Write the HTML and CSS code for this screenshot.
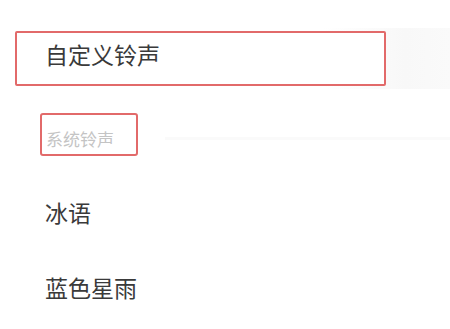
FILE: index.html
```html
<!DOCTYPE html>
<html lang="zh">
<head>
<meta charset="utf-8">
<link rel="stylesheet" href="styles.css">
</head>
<body>
<div class="page">
  <div class="custom-row">
    <div class="custom-box">自定义铃声</div>
  </div>
  <div class="section-row">
    <div class="section-box">系统铃声</div>
    <div class="section-line"></div>
  </div>
  <ul class="ring-list">
    <li class="ring-item">冰语</li>
    <li class="ring-item">蓝色星雨</li>
  </ul>
</div>
</body>
</html>
```
FILE: styles.css
```css
html, body {
  margin: 0;
  padding: 0;
  background: #ffffff;
}
.page {
  width: 450px;
  height: 329px;
  overflow: hidden;
  font-family: "Noto Sans CJK SC", "Noto Sans", sans-serif;
}
.custom-row {
  margin-top: 28px;
  height: 61px;
  padding-top: 3px;
  box-sizing: border-box;
  background: linear-gradient(to right, #ffffff 0%, #ffffff 72%, #f8f8f8 90%, #fafafa 100%);
}
.custom-box {
  margin-left: 15px;
  width: 371px;
  height: 55px;
  box-sizing: border-box;
  border: 2px solid #e26a6a;
  border-radius: 2px;
  background: #ffffff;
  display: flex;
  align-items: center;
  padding-left: 28px;
  padding-bottom: 8px;
  font-size: 23px;
  line-height: 23px;
  color: #3a3a3a;
}
.section-row {
  margin-top: 24px;
  display: flex;
  align-items: flex-start;
  padding-left: 40px;
}
.section-box {
  width: 98px;
  height: 43px;
  box-sizing: border-box;
  border: 2px solid #e26a6a;
  border-radius: 3px;
  padding-left: 4px;
  padding-top: 15px;
  font-size: 17px;
  line-height: 17px;
  color: #c4c4c4;
}
.section-line {
  flex: 1;
  margin-left: 27px;
  margin-top: 24px;
  height: 3px;
  background: #fafafa;
}
.ring-list {
  list-style: none;
  margin: 19px 0 0 0;
  padding: 0;
}
.ring-item {
  height: 75px;
  display: flex;
  align-items: center;
  padding-left: 45px;
  font-size: 23px;
  line-height: 23px;
  color: #3a3a3a;
}
```
